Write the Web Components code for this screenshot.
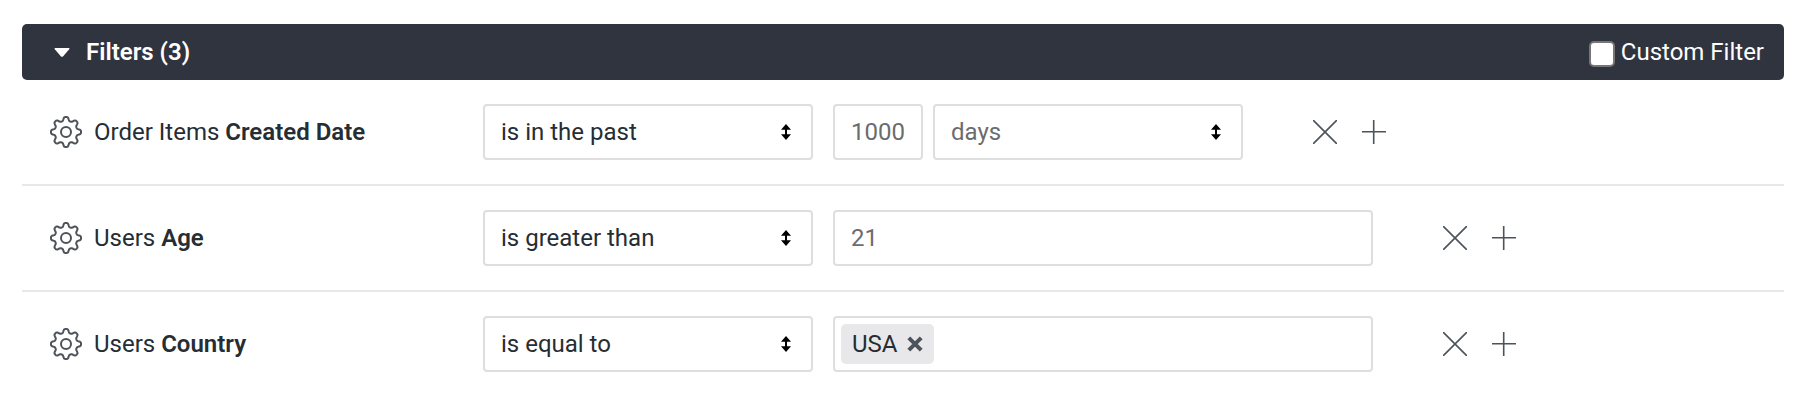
<!DOCTYPE html>
<html lang="en">
<head>
<meta charset="utf-8">
<meta name="viewport" content="width=device-width, initial-scale=1">
<title>Filters</title>
<style>
  body {
    margin: 0;
    padding: 24px 26px 24px 22px;
    background: #fff;
    color: #262d33;
    font: 24px/32px Roboto, "Liberation Sans", sans-serif;
    --line: #e8e8e8;
    --field-border: #dedede;
    --muted: #6c6c6c;
    --icon: #4c535b;
  }
</style>
</head>
<body>
<filter-panel heading="Filters (3)">
  <filter-row>
    <span slot="name">Order Items <b>Created Date</b></span>
    <pick-list label="Condition" options="is in the past|is on the day|is in range"></pick-list>
    <value-group slot="value">
      <text-field class="short" label="Amount" value="1000"></text-field>
      <pick-list class="unit" label="Unit" options="days|weeks|months"></pick-list>
    </value-group>
  </filter-row>
  <filter-row>
    <span slot="name">Users <b>Age</b></span>
    <pick-list label="Condition" options="is greater than|is less than|is equal to"></pick-list>
    <text-field class="full" slot="value" label="Age" value="21"></text-field>
  </filter-row>
  <filter-row>
    <span slot="name">Users <b>Country</b></span>
    <pick-list label="Condition" options="is equal to|contains|starts with"></pick-list>
    <tag-field class="full" slot="value"><tag-chip>USA</tag-chip></tag-field>
  </filter-row>
</filter-panel>

<script>
  const define = (name, render, connect) => {
    customElements.define(name, class extends HTMLElement {
      connectedCallback() {
        if (this.shadowRoot) return;
        this.attachShadow({ mode: 'open' }).innerHTML = render(this);
        if (connect) connect(this, this.shadowRoot);
      }
    });
  };

  const resetButton = `
    button { display: block; margin: 0; padding: 0; border: 0; background: none; color: inherit; font: inherit; cursor: pointer; }
    svg { display: block; }`;

  /* Outline of an eight-toothed gear centred on 16,16: rounded teeth, shallow valleys. */
  const gearOutline = () => {
    const points = [];
    for (let i = 0; i < 160; i++) {
      const a = i / 160 * 2 * Math.PI;
      const r = 13.2 + 1.85 * Math.tanh(1.6 * Math.cos(8 * a)) / Math.tanh(1.6);
      points.push((16 + r * Math.cos(a)).toFixed(2) + ' ' + (16 + r * Math.sin(a)).toFixed(2));
    }
    return 'M' + points.join('L') + 'Z';
  };

  const icons = {
    gear: `<svg width="32" height="32" viewBox="0 0 32 32" fill="none" stroke="currentColor" stroke-width="2" stroke-linejoin="round"><path d="${gearOutline()}"/><circle cx="16" cy="16" r="5"/></svg>`,
    remove: `<svg width="24" height="24" viewBox="0 0 24 24" fill="none" stroke="currentColor" stroke-width="1.6" stroke-linecap="round"><path d="M.6.6l22.8 22.8M23.4.6L.6 23.4"/></svg>`,
    add: `<svg width="24" height="24" viewBox="0 0 24 24" fill="none" stroke="currentColor" stroke-width="1.6" stroke-linecap="round"><path d="M11.700 .4v23.200M.4 11.700h23.200"/></svg>`
  };

  define('icon-button', el => `
    <style>
      :host { display: block; flex: none; color: var(--icon); }
      ${resetButton}
    </style>
    <button type="button" aria-label="${el.getAttribute('label')}">${icons[el.getAttribute('icon')]}</button>`);

  define('pick-list', el => `
    <style>
      :host { display: grid; flex: 0 1 330px; min-width: 0; height: 56px; box-sizing: border-box; }
      :host(.unit) { flex-basis: 310px; color: var(--muted); }
      select, svg { grid-area: 1 / 1; }
      select { appearance: none; box-sizing: border-box; width: 100%; height: 56px; margin: 0; padding: 0 48px 0 16px;
        border: 2px solid var(--field-border); border-radius: 4px; background: #fff; color: inherit; font: inherit; }
      svg { place-self: center end; margin-right: 22px; pointer-events: none; }
    </style>
    <select aria-label="${el.getAttribute('label')}">
      ${el.getAttribute('options').split('|').map(o => `<option>${o}</option>`).join('')}
    </select>
    <svg width="10" height="16" viewBox="0 0 10 16" fill="#000"><path d="M5 0l5 5.800H6v4.400h4L5 16 0 10.200h4V5.800H0z"/></svg>`);

  define('text-field', el => `
    <style>
      :host { display: block; min-width: 0; color: var(--muted); }
      :host(.short) { flex: none; width: 90px; }
      :host(.full) { flex: 0 1 540px; }
      input { box-sizing: border-box; display: block; width: 100%; height: 56px; margin: 0; padding: 0 16px;
        border: 2px solid var(--field-border); border-radius: 4px; background: #fff; color: inherit; font: inherit; }
    </style>
    <input type="text" aria-label="${el.getAttribute('label')}" value="${el.getAttribute('value')}">`);

  define('value-group', () => `
    <style>
      :host { display: flex; flex: 0 1 410px; gap: 10px; min-width: 0; }
    </style>
    <slot></slot>`);

  define('tag-field', () => `
    <style>
      :host { display: flex; align-items: center; flex: 0 1 540px; gap: 6px; box-sizing: border-box; min-width: 0; height: 56px;
        padding: 0 6px; border: 2px solid var(--field-border); border-radius: 4px; background: #fff; }
    </style>
    <slot></slot>`);

  define('tag-chip', () => `
    <style>
      :host { display: flex; align-items: center; gap: 10px; height: 40px; padding: 0 11px; border-radius: 5px; background: #e8e8ea; }
      ${resetButton}
      button { color: var(--icon); }
    </style>
    <slot></slot>
    <button type="button" aria-label="Remove value"><svg width="16" height="16" viewBox="0 0 16 16" fill="none" stroke="currentColor" stroke-width="4"><path d="M1.800 1.800l12.400 12.400M14.200 1.800L1.800 14.200"/></svg></button>`,
    (el, root) => root.querySelector('button').addEventListener('click', () => el.remove()));

  define('filter-row', () => `
    <style>
      :host { display: flex; align-items: center; padding: 24px 0; border-bottom: 2px solid var(--line); }
      :host(:last-of-type) { border-bottom: 0; }
      .name { display: flex; align-items: center; flex: 0 1 461px; gap: 12px; box-sizing: border-box; padding-left: 28px; }
      ::slotted(span) { white-space: nowrap; }
      .actions { display: flex; gap: 25px; padding-left: 70px; }
      .space { flex: 0 0 20px; }
    </style>
    <div class="name"><icon-button icon="gear" label="Filter settings"></icon-button><slot name="name"></slot></div>
    <slot></slot>
    <div class="space"></div>
    <slot name="value"></slot>
    <div class="actions">
      <icon-button icon="remove" label="Remove filter"></icon-button>
      <icon-button icon="add" label="Add filter"></icon-button>
    </div>`,
    el => el.querySelectorAll('b').forEach(b => { b.style.fontWeight = 600; }));

  define('filter-panel', el => `
    <style>
      :host { display: block; }
      ${resetButton}
      header { display: flex; align-items: center; justify-content: space-between; height: 56px; padding: 0 20px 0 32px;
        border-radius: 5px; background: #30343f; color: #fff; }
      button { display: flex; align-items: center; gap: 16px; font-weight: 600; }
      label { display: block; }
      input { appearance: none; box-sizing: border-box; width: 26px; height: 26px; margin: 0 6px 0 0; vertical-align: middle;
        border: 2px solid #767676; border-radius: 5px; background: #fff; }
      input:checked { background: #767676; }
    </style>
    <header>
      <button type="button" aria-expanded="true">
        <svg width="16" height="9" viewBox="0 0 16 9" fill="currentColor"><path d="M1.200 0h13.600q1.200.2.400 1.200L9.200 8.200q-1.200 1-2.400 0L.800 1.200Q0 .2 1.200 0z"/></svg>
        <span>${el.getAttribute('heading')}</span>
      </button>
      <label><input type="checkbox">Custom Filter</label>
    </header>
    <div class="rows"><slot></slot></div>`,
    (el, root) => {
      const button = root.querySelector('button');
      const rows = root.querySelector('.rows');
      button.addEventListener('click', () => {
        rows.hidden = !rows.hidden;
        button.setAttribute('aria-expanded', String(!rows.hidden));
      });
    });
</script>
</body>
</html>
